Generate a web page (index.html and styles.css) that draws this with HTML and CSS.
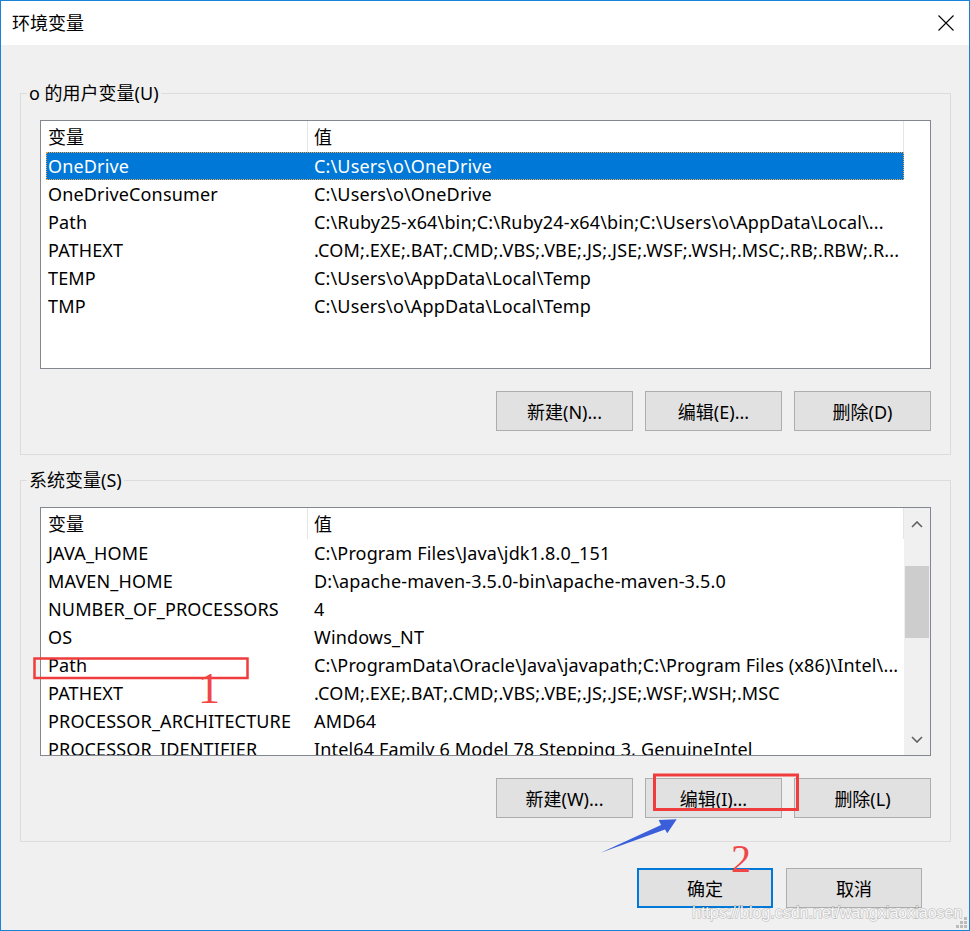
FILE: index.html
```html
<!DOCTYPE html>
<html>
    <head>
        <title>环境变量</title>
        <meta charset="UTF-8">
        <link rel="stylesheet" href="styles.css">
    </head>
    <body>
        <div class="window">
            <div class="titlebar">
                <span class="title">环境变量</span>
                <svg class="close" width="16" height="16" viewBox="0 0 16 16">
                    <path d="M0.5 0.5L15.5 15.5M15.5 0.5L0.5 15.5" stroke="#000" stroke-width="1.1" fill="none"/>
                </svg>
            </div>

            <div class="content">
                <fieldset class="group">
                    <legend>o 的用户变量(U)</legend>
                    <div class="group-body">
                        <div class="list">
                            <div class="list-main">
                                <div class="list-head"><div class="cell">变量</div><div class="cell">值</div></div>
                                <div class="row selected"><div class="cell">OneDrive</div><div class="cell">C:\Users\o\OneDrive</div></div>
                                <div class="row"><div class="cell">OneDriveConsumer</div><div class="cell">C:\Users\o\OneDrive</div></div>
                                <div class="row"><div class="cell">Path</div><div class="cell">C:\Ruby25-x64\bin;C:\Ruby24-x64\bin;C:\Users\o\AppData\Local\...</div></div>
                                <div class="row"><div class="cell">PATHEXT</div><div class="cell">.COM;.EXE;.BAT;.CMD;.VBS;.VBE;.JS;.JSE;.WSF;.WSH;.MSC;.RB;.RBW;.R...</div></div>
                                <div class="row"><div class="cell">TEMP</div><div class="cell">C:\Users\o\AppData\Local\Temp</div></div>
                                <div class="row"><div class="cell">TMP</div><div class="cell">C:\Users\o\AppData\Local\Temp</div></div>
                            </div>
                            <div class="list-side"></div>
                        </div>
                        <div class="buttons">
                            <button type="button" class="btn">新建(N)...</button>
                            <button type="button" class="btn">编辑(E)...</button>
                            <button type="button" class="btn">删除(D)</button>
                        </div>
                    </div>
                </fieldset>

                <fieldset class="group">
                    <legend>系统变量(S)</legend>
                    <div class="group-body">
                        <div class="list">
                            <div class="list-main">
                                <div class="list-head"><div class="cell">变量</div><div class="cell">值</div></div>
                                <div class="row"><div class="cell">JAVA_HOME</div><div class="cell">C:\Program Files\Java\jdk1.8.0_151</div></div>
                                <div class="row"><div class="cell">MAVEN_HOME</div><div class="cell">D:\apache-maven-3.5.0-bin\apache-maven-3.5.0</div></div>
                                <div class="row"><div class="cell">NUMBER_OF_PROCESSORS</div><div class="cell">4</div></div>
                                <div class="row"><div class="cell">OS</div><div class="cell">Windows_NT</div></div>
                                <div class="row"><div class="cell">Path</div><div class="cell">C:\ProgramData\Oracle\Java\javapath;C:\Program Files (x86)\Intel\...</div></div>
                                <div class="row"><div class="cell">PATHEXT</div><div class="cell">.COM;.EXE;.BAT;.CMD;.VBS;.VBE;.JS;.JSE;.WSF;.WSH;.MSC</div></div>
                                <div class="row"><div class="cell">PROCESSOR_ARCHITECTURE</div><div class="cell">AMD64</div></div>
                                <div class="row"><div class="cell">PROCESSOR_IDENTIFIER</div><div class="cell">Intel64 Family 6 Model 78 Stepping 3, GenuineIntel</div></div>
                            </div>
                            <div class="scrollbar">
                                <div class="sb-btn up">
                                    <svg width="12" height="7" viewBox="0 0 12 7"><path d="M1 6L6 1L11 6" stroke="#606060" stroke-width="1.6" fill="none"/></svg>
                                </div>
                                <div class="sb-track"><div class="sb-thumb"></div></div>
                                <div class="sb-btn down">
                                    <svg width="12" height="7" viewBox="0 0 12 7"><path d="M1 1L6 6L11 1" stroke="#606060" stroke-width="1.6" fill="none"/></svg>
                                </div>
                            </div>
                        </div>
                        <div class="buttons">
                            <button type="button" class="btn">新建(W)...</button>
                            <button type="button" class="btn">编辑(I)...</button>
                            <button type="button" class="btn">删除(L)</button>
                        </div>
                    </div>
                </fieldset>

                <div class="footer">
                    <button type="button" class="btn default">确定</button>
                    <button type="button" class="btn">取消</button>
                </div>
            </div>

            <!-- anotaciones encima de la captura -->
            <svg class="marks" width="970" height="931" viewBox="0 0 970 931">
                <rect class="box" x="34.5" y="658.5" width="213" height="19.5" stroke-width="2.5"/>
                <rect class="box" x="654.5" y="775" width="143" height="34.5" stroke-width="3"/>
                <polygon class="arrow" points="600.7,852.7 661,825 658.7,820 676.7,819.3 667.3,833.3 665,829.5"/>
                <text class="num" x="198" y="703" font-size="44">1</text>
                <text class="num" x="731" y="872" font-size="40">2</text>
                <text class="watermark" x="692" y="918">https://blog.csdn.net/wangxiaoxiaosen</text>
                <g class="grip">
                    <rect x="964" y="917" width="3" height="3"/>
                    <rect x="960" y="921" width="3" height="3"/>
                    <rect x="964" y="921" width="3" height="3"/>
                    <rect x="956" y="925" width="3" height="3"/>
                    <rect x="960" y="925" width="3" height="3"/>
                    <rect x="964" y="925" width="3" height="3"/>
                </g>
            </svg>
        </div>
    </body>
</html>
```

FILE: styles.css
```css
body {
    margin: 0;
    background-color: #fff;
}

.window {
    position: relative;
    width: 970px;
    height: 931px;
    box-sizing: border-box;
    border: 1px solid #1883d7;
    background-color: #f0f0f0;
    font-family: "Noto Sans", "Noto Sans CJK SC", sans-serif;
    font-size: 18px;
    color: #000;
    overflow: hidden;
}

.titlebar {
    height: 44px;
    background-color: #fff;
    display: flex;
    align-items: center;
    justify-content: space-between;
    padding: 0 15px 0 11px;
}
.title {
    line-height: 24px;
}
.close {
    display: block;
}

.content {
    padding: 36px 18px 0 19px;
}

.group {
    margin: 0;
    padding: 0;
    min-width: 0;
    border: 1px solid #dcdcdc;
}
.group + .group {
    margin-top: 13px;
}
.group legend {
    margin-left: 6px;
    padding: 0 2px;
    line-height: 24px;
}
.group-body {
    padding: 15px 19px 23px;
}

.list {
    display: flex;
    height: 249px;
    box-sizing: border-box;
    border: 1px solid #828790;
    background-color: #fff;
    overflow: hidden;
}
.list-main {
    flex: 1;
    min-width: 0;
    padding-left: 5px;
}
.list-side {
    width: 26px;
}

.list-head,
.row {
    display: grid;
    grid-template-columns: 262px 1fr;
}
.list-head {
    height: 31px;
    line-height: 33px;
}
.list-head .cell {
    border-right: 1px solid #e5e5e5;
}
.row {
    height: 28px;
    line-height: 28px;
}
.row .cell {
    letter-spacing: 0.15px;
}
.row.selected {
    background-color: #0078d7;
    color: #fff;
    outline: 1px dotted #f3a54c;
    outline-offset: -1px;
}
.cell {
    padding-left: 2px;
    white-space: nowrap;
    overflow: hidden;
}
.cell + .cell {
    padding-left: 6px;
}

.scrollbar {
    width: 26px;
    display: flex;
    flex-direction: column;
    background-color: #f0f0f0;
}
.sb-btn {
    display: flex;
    align-items: center;
    justify-content: center;
}
.sb-btn.up {
    height: 33px;
}
.sb-btn.down {
    height: 31px;
}
.sb-btn svg {
    display: block;
}
.sb-track {
    flex: 1;
    padding-top: 25px;
}
.sb-thumb {
    height: 72px;
    margin: 0 1px;
    background-color: #cdcdcd;
}

.buttons {
    display: flex;
    justify-content: flex-end;
    gap: 12px;
    margin-top: 22px;
}
.btn {
    width: 137px;
    height: 40px;
    box-sizing: border-box;
    padding: 0;
    border: 1px solid #adadad;
    background-color: #e1e1e1;
    font: inherit;
    color: #000;
}
.btn.default {
    border: 2px solid #0078d7;
}

.footer {
    display: flex;
    justify-content: flex-end;
    gap: 13px;
    margin-top: 26px;
    padding-right: 29px;
}
.footer .btn {
    width: 136px;
}

.marks {
    position: absolute;
    left: -1px;
    top: -1px;
    pointer-events: none;
}
.box {
    fill: none;
    stroke: #f03c3c;
}
.arrow {
    fill: #3b5fdb;
}
.num {
    font-family: "Liberation Serif", serif;
    fill: #f04646;
}
.watermark {
    font-family: "Liberation Sans", Arial, sans-serif;
    font-size: 16px;
    fill: #f7f7f7;
    stroke: rgba(0, 0, 0, 0.2);
    stroke-width: 1.5px;
    paint-order: stroke;
}
.grip rect {
    fill: #bcbcbc;
}
```
